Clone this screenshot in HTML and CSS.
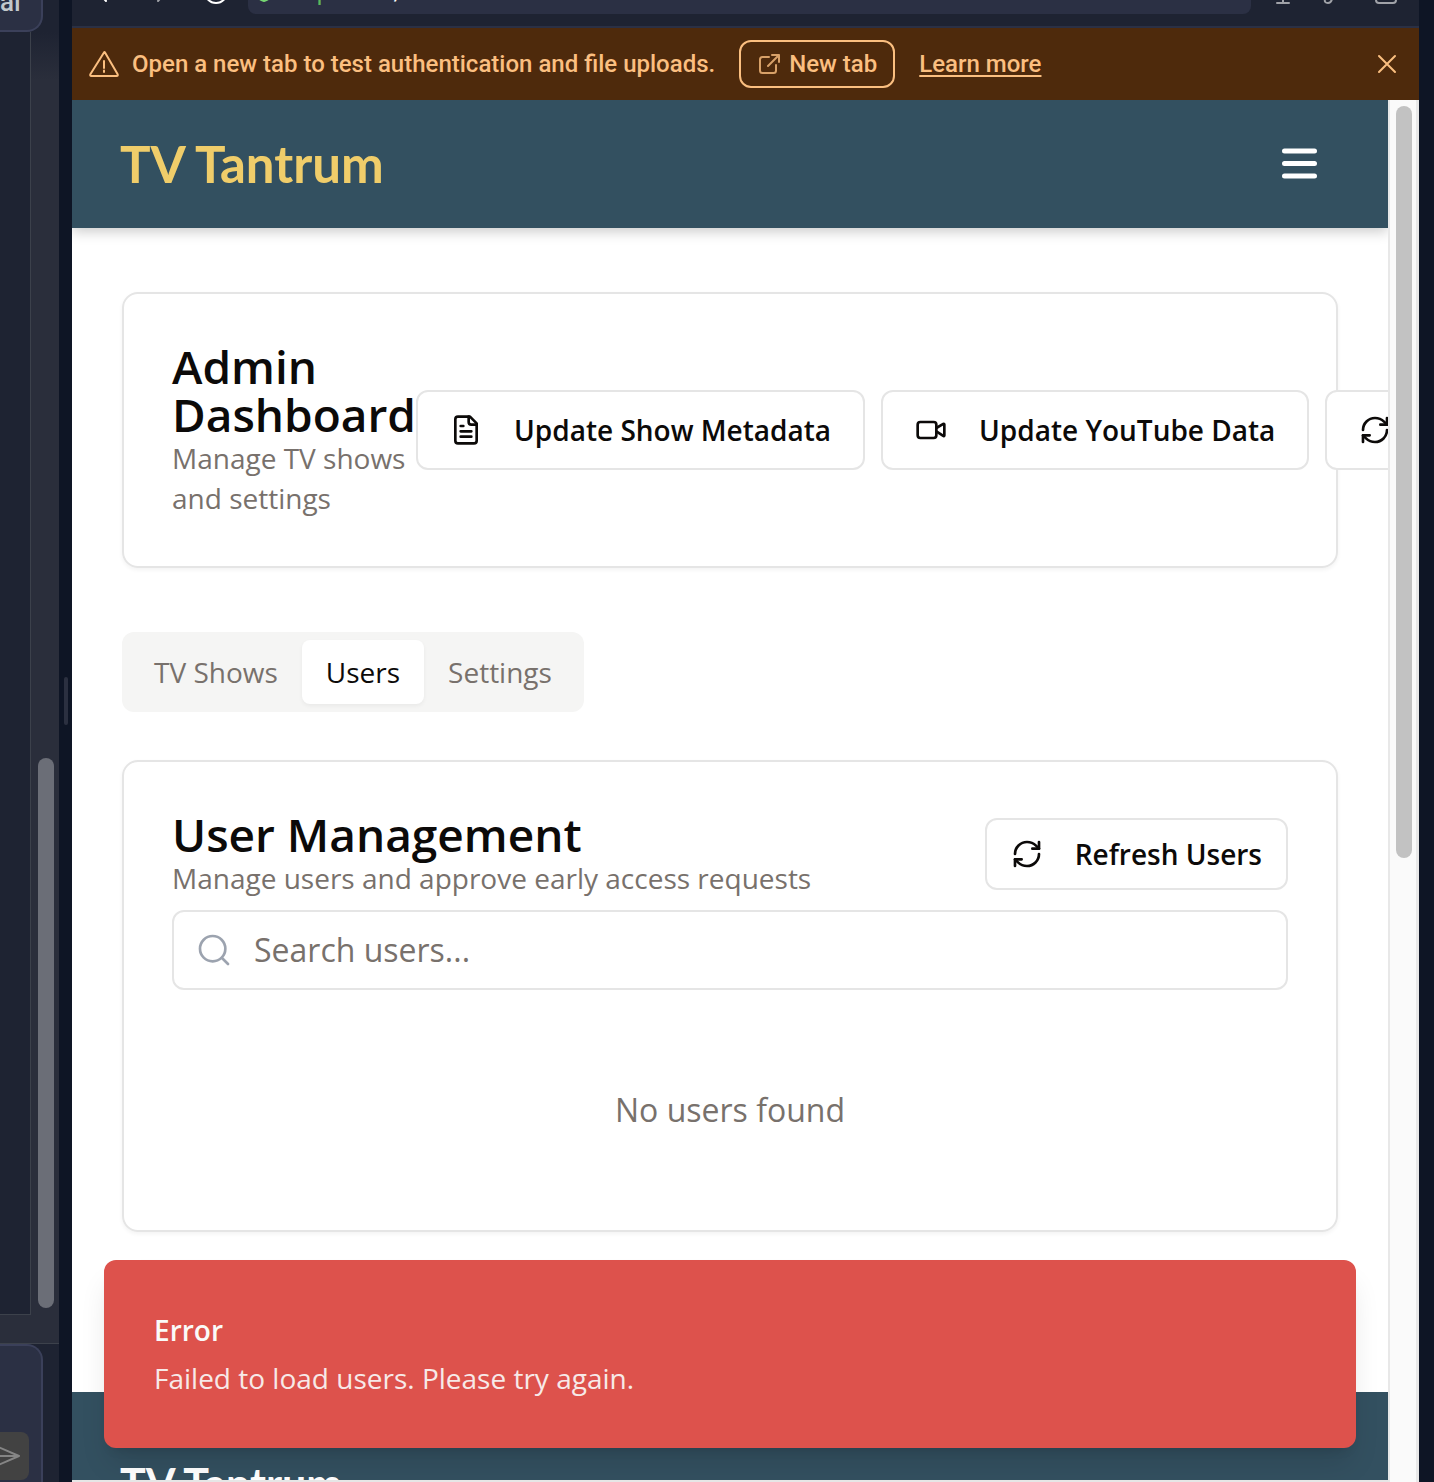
FILE: index.html
```html
<!DOCTYPE html>
<html lang="en">
<head>
<meta charset="utf-8">
<meta name="viewport" content="width=device-width, initial-scale=1">
<title>TV Tantrum – Admin Dashboard</title>
<link rel="stylesheet" href="styles.css">
</head>
<body>
<svg class="sprite" aria-hidden="true">
  <symbol id="refresh" viewBox="0 0 24 24"><path d="M3 12a9 9 0 0 1 9-9 9.75 9.75 0 0 1 6.74 2.74L21 8"/><path d="M21 3v5h-5"/><path d="M21 12a9 9 0 0 1-9 9 9.75 9.75 0 0 1-6.74-2.74L3 16"/><path d="M8 16H3v5"/></symbol>
</svg>
<div class="workspace">
  <aside class="side">
    <div class="side-top"><span class="side-label">al</span></div>
    <div class="side-body">
      <div class="terminal"></div>
      <div class="side-track"><div class="side-thumb"></div></div>
    </div>
    <div class="side-bottom">
      <div class="composer">
        <button class="send" type="button" aria-label="Send">
          <svg class="icon" viewBox="0 0 32 32"><path d="M5 6l23 10L5 26l3-10zM8 16h20"/></svg>
        </button>
      </div>
    </div>
  </aside>
  <div class="divider"><span class="handle"></span></div>

  <section class="pane">
    <div class="toolbar">
      <button class="tool" type="button" aria-label="Back"><svg class="icon" viewBox="0 0 24 24"><path d="M19 11H5M14 21L5 11l9-10"/></svg></button>
      <button class="tool tool-dim" type="button" aria-label="Forward"><svg class="icon" viewBox="0 0 24 24"><path d="M5 11h14M10 21l9-10-9-10"/></svg></button>
      <button class="tool" type="button" aria-label="Reload"><svg class="icon" viewBox="0 0 24 24"><circle cx="12" cy="12" r="11"/></svg></button>
      <div class="address">
        <svg class="icon shield" viewBox="0 0 16 24"><path d="M2 6h12v9c0 4-3 5-6 6-3-1-6-2-6-6z"/></svg>
        <span><span class="host">replit.dev</span>/</span>
      </div>
      <div class="tool-group">
        <button class="tool tool-dim" type="button" aria-label="Devices"><svg class="icon" viewBox="0 0 24 24"><path d="M6 23h12M12 23V14M3 3h18v11H3z"/></svg></button>
        <button class="tool tool-dim" type="button" aria-label="Inspect"><svg class="icon" viewBox="0 0 24 24"><path d="M11 4l-9 15q-1 4 3 4 3 0 4-4l8-12"/></svg></button>
        <button class="tool tool-dim" type="button" aria-label="Open externally"><svg class="icon" viewBox="0 0 24 24"><rect x="1" y="3" width="20" height="20" rx="3"/></svg></button>
      </div>
    </div>

    <div class="banner">
      <svg class="icon banner-warn" viewBox="0 0 32 32"><path d="M16 4.500L2.500 26q-1 2 1 2h25q2 0 1-2L17 4.500q-.5-.8-1 0zM16 13v7M16 22.500v1.500"/></svg>
      <span class="banner-text">Open a new tab to test authentication and file uploads.</span>
      <button class="new-tab" type="button">
        <svg class="icon" viewBox="0 0 24 24"><path d="M12 5H5.500Q3 5 3 7.500v11Q3 21 5.500 21h11q2.500 0 2.500-2.500V13M11 14L22 3M15 3h7v7"/></svg>
        New tab
      </button>
      <a class="learn" href="#learn">Learn more</a>
      <button class="close" type="button" aria-label="Dismiss"><svg class="icon" viewBox="0 0 24 24"><path d="M4 4l16 16M20 4L4 20"/></svg></button>
    </div>

    <div class="viewport">
      <div class="page">
        <header class="site-header">
          <a class="brand" href="#home">TV Tantrum</a>
          <button class="menu" type="button" aria-label="Open menu"><svg class="icon" viewBox="0 0 36 36"><path d="M2.500 5h30M2.500 17.500h30M2.500 30h30"/></svg></button>
        </header>

        <main class="main">
          <section class="card dashboard">
            <div class="dashboard-title">
              <h1 class="heading">Admin Dashboard</h1>
              <p class="desc">Manage TV shows and settings</p>
            </div>
            <div class="actions">
              <button class="btn" type="button">
                <svg class="icon" viewBox="0 0 24 24"><path d="M15 2H6a2 2 0 0 0-2 2v16a2 2 0 0 0 2 2h12a2 2 0 0 0 2-2V7z"/><path d="M14 2v4a2 2 0 0 0 2 2h4M10 9H8M16 13H8M16 17H8"/></svg>
                Update Show Metadata
              </button>
              <button class="btn" type="button">
                <svg class="icon" viewBox="0 0 24 24"><path d="m16 13 5.223 3.482a.5.5 0 0 0 .777-.416V7.870a.5.5 0 0 0-.752-.432L16 10.500"/><rect x="2" y="6" width="14" height="12" rx="2"/></svg>
                Update YouTube Data
              </button>
              <button class="btn" type="button" aria-label="Refresh data"><svg class="icon"><use href="#refresh"/></svg></button>
            </div>
          </section>

          <div class="tabs" role="tablist">
            <button class="tab" type="button" role="tab" aria-selected="false">TV Shows</button>
            <button class="tab tab-active" type="button" role="tab" aria-selected="true">Users</button>
            <button class="tab" type="button" role="tab" aria-selected="false">Settings</button>
          </div>

          <section class="card">
            <div class="card-head">
              <div>
                <h2 class="heading">User Management</h2>
                <p class="desc">Manage users and approve early access requests</p>
              </div>
              <button class="btn btn-small" type="button"><svg class="icon"><use href="#refresh"/></svg>Refresh Users</button>
            </div>
            <label class="search">
              <svg class="icon" viewBox="0 0 24 24" aria-hidden="true"><circle cx="11" cy="11" r="9.500"/><path d="M18 18l4.500 4.500"/></svg>
              <input class="search-input" type="text" placeholder="Search users..." aria-label="Search users">
            </label>
            <p class="empty">No users found</p>
          </section>
        </main>

        <footer class="footer"><span class="footer-brand">TV Tantrum</span></footer>

        <div class="toast" role="alert">
          <strong class="toast-title">Error</strong>
          <span class="toast-text">Failed to load users. Please try again.</span>
        </div>
      </div>
      <div class="scroller"><div class="scroll-thumb"></div></div>
    </div>
  </section>
</div>
</body>
</html>
```
FILE: styles.css
```css
* { box-sizing: border-box; }
body { margin: 0; background: #0e1525; font-family: "Open Sans", "Noto Sans", sans-serif; }
h1, h2, p { margin: 0; }
button { margin: 0; padding: 0; border: 0; background: none; color: inherit; font: inherit; white-space: nowrap; }
.icon { flex: none; width: 32px; height: 32px; fill: none; stroke: currentColor; stroke-width: 2; stroke-linecap: round; stroke-linejoin: round; }
.sprite { display: none; }

.workspace { display: grid; grid-template-columns: 59px 13px minmax(0, 1fr) 15px; height: 100vh; overflow: hidden; }

/* left tool panel */
.side { display: flex; flex-direction: column; min-height: 0; background: #1e2332; }
.side-top { display: flex; align-items: flex-end; height: 32px; margin-right: 16px; border: solid #3b405a; border-width: 0 2px 2px 0; border-bottom-right-radius: 16px; background: #2b3044; }
.side-label { padding-bottom: 16px; color: #c2c8cc; font: 500 26px/24px Roboto, sans-serif; }
.side-body { display: flex; flex: 1; min-height: 0; background: linear-gradient(#1e2332, #2a2e3b 48px); border-bottom: 1px solid #3c414b; }
.terminal { width: 31px; margin-bottom: 28px; border: solid #3c414b; border-width: 0 1px 1px 0; background: #1e2332; }
.side-track { display: flex; flex: 1; align-items: flex-end; padding: 0 5px 35px 7px; }
.side-thumb { flex: 1; height: 550px; border-radius: 8px; background: #6b6e77; }
.side-bottom { height: 138px; padding-right: 16px; }
.composer { display: flex; align-items: flex-end; height: 100%; padding: 0 12px 2px 0; border: solid #3b405a; border-width: 2px 2px 0 0; border-top-right-radius: 16px; background: #2b3044; overflow: hidden; }
.send { display: flex; flex: 1; align-items: center; justify-content: flex-end; min-width: 0; height: 48px; padding-right: 6px; border-radius: 0 8px 8px 0; background: #424242; color: #858585; overflow: hidden; }

.divider { display: flex; align-items: center; justify-content: flex-end; padding: 0 4px 80px 0; background: #0e1525; }
.handle { width: 4px; height: 48px; border-radius: 2px; background: #2b3040; }

/* preview pane */
.pane { display: flex; flex-direction: column; min-width: 0; min-height: 0; }
.toolbar { display: flex; align-items: flex-end; gap: 32px; height: 28px; padding: 0 20px 12px 20px; border-bottom: 2px solid #2b3044; background: #1e2332; color: #fff; overflow: hidden; }
.tool-group { display: flex; gap: 28px; }
.tool { height: 24px; margin-bottom: 10px; }
.tool .icon { display: block; width: 24px; height: 24px; }
.tool-dim { color: #a0a2a8; }
.address { display: flex; flex: 1; align-items: center; gap: 24px; height: 44px; margin-left: -12px; margin-right: -12px; padding: 0 8px; border-radius: 8px; background: #2b3044; font: 24px/32px Roboto, sans-serif; }
.shield { width: 16px; height: 24px; color: #76d672; }
.host { color: #5db85c; }

.banner { display: flex; align-items: center; height: 72px; padding: 0 16px; background: #4e2a0c; color: #fbbf80; font: 500 24px/32px Roboto, sans-serif; }
.banner-text { margin: 0 24px 0 12px; white-space: nowrap; }
.new-tab { display: flex; align-items: center; gap: 8px; height: 48px; padding: 0 16px; border: 2px solid #fbbf80; border-radius: 12px; }
.new-tab .icon { width: 24px; height: 24px; opacity: .8; }
.learn { margin-left: 24px; color: inherit; white-space: nowrap; text-underline-offset: 3px; text-decoration-thickness: 2px; }
.close { display: flex; margin-left: auto; padding: 4px; }
.close .icon { width: 24px; height: 24px; }

.viewport { display: flex; flex: 1; min-height: 0; }
.page { position: relative; flex: 1; min-width: 0; overflow: hidden; border-bottom: 2px solid #e6e6e6; background: #fff; color: #0c0a09; }
.scroller { width: 31px; padding: 6px 4px 0 6px; border: solid #e8e8e8; border-width: 0 3px 0 2px; background: #fafafa; }
.scroll-thumb { width: 16px; height: 752px; border-radius: 8px; background: #c2c2c2; }

.site-header { display: flex; align-items: center; justify-content: space-between; height: 128px; padding: 0 70px 0 48px; background: #335060; box-shadow: 0 4px 12px rgba(0, 0, 0, .2); }
.brand { color: #f0cd6a; font: 700 51px/64px Lato, sans-serif; text-decoration: none; }
.menu { color: #fff; }
.menu .icon { display: block; width: 36px; height: 36px; stroke-width: 5; }

.main { padding: 64px 50px 160px; }
.card { padding: 48px; border: 2px solid #e5e5e5; border-radius: 16px; box-shadow: 0 2px 4px rgba(0, 0, 0, .05); }
.dashboard { display: flex; align-items: center; }
.dashboard-title { flex: 0 0 244px; }
.heading { font-size: 46px; font-weight: 600; line-height: 48px; }
.desc { color: #78716c; font-size: 28px; line-height: 40px; }
.actions { display: flex; gap: 16px; }
.btn { display: flex; align-items: center; gap: 32px; height: 80px; padding: 0 32px; border: 2px solid #e5e5e5; border-radius: 12px; background: #fff; font-size: 28px; font-weight: 600; line-height: 40px; }
.btn-small { height: 72px; padding: 0 24px; }

.tabs { display: flex; width: fit-content; margin: 64px 0 48px; padding: 8px; border-radius: 12px; background: #f5f5f4; }
.tab { height: 64px; padding: 0 24px; border-radius: 8px; color: #78716c; font-size: 28px; line-height: 40px; }
.tab-active { background: #fff; color: #0c0a09; box-shadow: 0 2px 4px rgba(0, 0, 0, .05); }

.card-head { display: flex; align-items: center; justify-content: space-between; }
.search { display: flex; align-items: center; gap: 24px; height: 80px; margin-top: 12px; padding: 0 24px; border: 2px solid #e5e5e5; border-radius: 12px; color: #9ca3af; }
.search-input { flex: 1; min-width: 0; padding: 0; border: 0; outline: 0; background: none; color: #0c0a09; font: 32px/48px "Open Sans", "Noto Sans", sans-serif; }
.search-input::placeholder { color: #78716c; opacity: 1; }
.empty { padding: 96px 0 48px; color: #78716c; font-size: 32px; line-height: 48px; text-align: center; }

.footer { padding: 64px 48px; background: #335060; }
.footer-brand { color: #fff; font: 700 43px/56px Lato, sans-serif; }

.toast { position: absolute; right: 32px; bottom: 32px; left: 32px; display: flex; flex-direction: column; gap: 8px; padding: 50px; border-radius: 12px; background: #dd524c; color: #fafaf9; font-size: 28px; line-height: 40px; box-shadow: 0 20px 30px -6px rgba(0, 0, 0, .12), 0 8px 12px -8px rgba(0, 0, 0, .15); }
.toast-title { font-weight: 600; }
.toast-text { opacity: .9; }
```
